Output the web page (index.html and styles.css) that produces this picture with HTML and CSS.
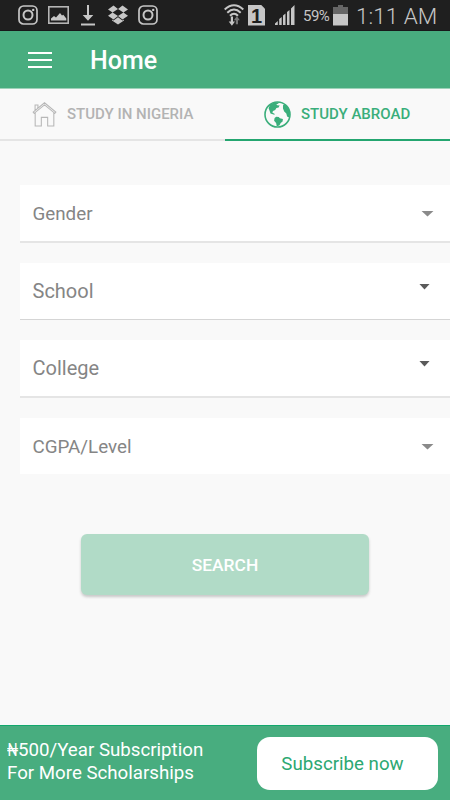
FILE: index.html
```html
<!DOCTYPE html>
<html lang="en">
<head>
  <meta charset="UTF-8" />
  <title>Home</title>
  <meta name="viewport" content="width=device-width, initial-scale=1.0" />
  <link rel="stylesheet" href="styles.css">
</head>
<body>
  <div class="status-bar">
    <div class="notifications">
      <svg width="20" height="20" viewBox="0 0 20 20" fill="none" stroke="#c6c6c6">
        <rect x="1" y="1" width="18" height="18" rx="4.5" stroke-width="1.7"/>
        <circle cx="10" cy="10" r="4.5" stroke-width="2"/>
        <circle cx="15.2" cy="4.9" r="1.2" fill="#c6c6c6" stroke="none"/>
      </svg>
      <svg width="21" height="18" viewBox="0 0 21 18">
        <rect x=".8" y=".8" width="19.4" height="16.4" fill="none" stroke="#b5b5b5" stroke-width="1.6"/>
        <path d="M3 14.5v-2l3-2.5 2 1.5 4-4.5 2 2.5 1.3-.8 3 3.8v2z" fill="#c6c6c6"/>
      </svg>
      <svg width="14" height="21" viewBox="0 0 14 21" fill="#c6c6c6">
        <path d="M6 0h2v10h4.3L7 15.7 1.7 10H6zM0 18.5h14v2H0z"/>
      </svg>
      <svg width="20" height="20" viewBox="0 0 20 20" fill="#c6c6c6">
        <path d="M5.5.6 10 4 4.6 7.5 0 4.4zM14.5.6 20 4.4l-4.6 3.1L10 4zM4.6 7.5 10 11l-4.5 3.6L0 10.7zM15.4 7.5l4.6 3.2-5.5 3.9L10 11zM10 12.2l4.5 3.3 1.5-.9v1L10 19.6l-6-4v-1l1.5.9z"/>
      </svg>
      <svg width="20" height="20" viewBox="0 0 20 20" fill="none" stroke="#c6c6c6">
        <rect x="1" y="1" width="18" height="18" rx="4.5" stroke-width="1.7"/>
        <circle cx="10" cy="10" r="4.5" stroke-width="2"/>
        <circle cx="15.2" cy="4.9" r="1.2" fill="#c6c6c6" stroke="none"/>
      </svg>
    </div>
    <div class="system">
      <svg class="wifi" width="20" height="22" viewBox="0 0 20 22" fill="none">
        <path d="M.7 5.4Q10-2.8 19.3 5.4M3.3 8.7Q10 2.4 16.7 8.7M6 11.7Q10 7.6 14 11.7" stroke="#c6c6c6" stroke-width="2"/>
        <path d="M6.8 12.5h2.2v5h2L7.9 21.7l-3.2-4.2h2.1z" fill="#c6c6c6"/>
        <path d="M11.8 20.3h2.2v-4h1.8L12.9 12l-3 4.3h1.9z" fill="#777"/>
      </svg>
      <span class="sim">1</span>
      <svg class="signal" width="20" height="20" viewBox="0 0 20 20" fill="#c6c6c6">
        <path d="M0 20v-1.5L2.8 16v4zM4.2 20v-6l2.5-2v8zM8 20v-9.5l2.5-2V20zM12 20V7l2.5-2v15zM16 20V3.5L19.5 0v20z"/>
      </svg>
      <span class="percent">59%</span>
      <svg class="battery" width="15" height="21" viewBox="0 0 15 21">
        <path d="M0 2h5V0h5v2h5v8H0z" fill="#666"/>
        <path d="M0 9h15v11.5H0z" fill="#c6c6c6"/>
      </svg>
      <span class="clock">1:11 AM</span>
    </div>
  </div>

  <header class="app-bar">
    <button class="menu" aria-label="Menu"><span></span><span></span><span></span></button>
    <h1>Home</h1>
  </header>

  <nav class="tabs">
    <a class="tab">
      <svg width="25" height="25" viewBox="0 0 26 26" fill="none" stroke="#b7b7b7" stroke-width="1.1">
        <path d="M1.2 10.6 13 .8l11.8 9.8-1 1.2L13 3 2.2 11.8zM3.2 8.8V3.2h3v3.1M3.3 11v14h6.4v-9h6.6v9h6.4V11"/>
      </svg>
      <span>STUDY IN NIGERIA</span>
    </a>
    <a class="tab active">
      <svg width="27" height="27" viewBox="0 0 27 27">
        <circle cx="13.5" cy="13.5" r="12.5" fill="none" stroke="#3aae7b" stroke-width="1.6"/>
        <path d="M6 3.8 9.5 1.7 15 1.3l-.8 1.5-2 .4 1.6 1.2 1.8-.2-1 2.4-2.2.5-1.2 2-2.2 1-.7 1.5 2.5 1.3-.5.8-3.8-1.2L5.4 9.2l-.8-2zM10.6 17l1.6-1.3 2.5.3 1.2 1.2 3 .8-.3 2.4-1.9 1.6-1.3 2.4-2.6.9-.7-3.4-2-2.2zM19 4.2l2.4-.9 3.3 4.3 1.3 5.5-.9 3.5-2-1.2-.8-3-2.1-1.9-1.2-3.1z" fill="#3aae7b"/>
      </svg>
      <span>STUDY ABROAD</span>
    </a>
  </nav>

  <main>
    <div class="field">Gender<i class="arrow"></i></div>
    <div class="field large thin">School<i class="arrow dark"></i></div>
    <div class="field large">College<i class="arrow dark"></i></div>
    <div class="field last">CGPA/Level<i class="arrow"></i></div>
    <button class="search">SEARCH</button>
  </main>

  <footer class="subscribe">
    <p><span class="naira">₦</span>500/Year Subscription<br>For More Scholarships</p>
    <button>Subscribe now</button>
  </footer>
</body>
</html>
```
FILE: styles.css
```css
* {
  box-sizing: border-box;
}
body {
  margin: 0;
  height: 800px;
  display: flex;
  flex-direction: column;
  font-family: Roboto, sans-serif;
  background: #f9f9f9;
  overflow: hidden;
}
button {
  border: none;
  padding: 0;
  font-family: inherit;
}
svg {
  display: block;
  flex: none;
}

/* status bar */
.status-bar {
  height: 31px;
  flex: none;
  display: flex;
  justify-content: space-between;
  padding: 0 12px 0 18px;
  background: #1f1f1f;
  border-bottom: 1px solid #17191a;
  color: #c6c6c6;
}
.notifications,
.system {
  display: flex;
  align-items: center;
}
.notifications {
  gap: 10px;
}
.notifications svg:nth-child(3) {
  margin: 0 3px 0 2px;
}
.sim {
  width: 17px;
  height: 21px;
  margin-left: 4px;
  background: #c6c6c6;
  clip-path: polygon(0 0, 75% 0, 100% 20%, 100% 100%, 0 100%);
  color: #1f1f1f;
  font-family: "Liberation Sans", sans-serif;
  font-size: 20px;
  font-weight: 700;
  line-height: 22px;
  text-align: center;
}
.signal {
  margin-left: 10px;
}
.percent {
  width: 27px;
  margin: 2px 0 0 8px;
  font-size: 15px;
  letter-spacing: -0.5px;
}
.battery {
  margin-left: 3px;
}
.clock {
  width: 82px;
  margin: 1px 0 0 8px;
  font-size: 22.5px;
  font-weight: 300;
  white-space: nowrap;
}

/* app bar */
.app-bar {
  height: 58px;
  flex: none;
  display: flex;
  align-items: center;
  padding-left: 28px;
  background: #48ad7f;
  border-bottom: 1px solid #9dd2b9;
}
.menu {
  width: 24px;
  margin-top: 1px;
  display: flex;
  flex-direction: column;
  gap: 5px;
  background: none;
}
.menu span {
  height: 2px;
  background: #fff;
}
h1 {
  margin: 2px 0 0 38px;
  font-size: 25px;
  font-weight: 500;
  color: #fff;
}

/* tabs */
.tabs {
  height: 52px;
  flex: none;
  display: grid;
  grid-template-columns: 225px 225px;
}
.tab {
  display: flex;
  align-items: center;
  gap: 10px;
  padding-left: 32px;
  border-bottom: 2px solid #e5e5e5;
  font-size: 15px;
  font-weight: 500;
  color: #b3b3b3;
}
.tab.active {
  padding-left: 39px;
  border-color: #24a670;
  color: #3aae7b;
}

/* search form */
main {
  flex: 1;
  display: flex;
  flex-direction: column;
  padding: 44px 0 0 20px;
}
.field {
  height: 58px;
  margin-bottom: 20px;
  display: flex;
  align-items: center;
  justify-content: space-between;
  padding: 1px 16px 0 12.5px;
  background: #fff;
  border-bottom: 2px solid #e5e5e5;
  font-size: 18.8px;
  line-height: 24px;
  color: #858585;
}
.field.large {
  padding-top: 0;
  font-size: 20px;
}
.field.thin {
  height: 57px;
  border-bottom: 1px solid #d5d5d5;
}
.field.last {
  height: 56px;
  border: none;
}
.arrow {
  width: 13px;
  height: 6px;
  background: #8a8a8a;
  clip-path: polygon(0 0, 100% 0, 50% 100%);
}
.arrow.dark {
  width: 11px;
  margin: 0 4px 9px 0;
  background: #5a5a5a;
}
.search {
  width: 288px;
  height: 61px;
  margin: 40px 0 0 61px;
  border-radius: 6px;
  background: #b1dbc7;
  box-shadow: 0 2px 3px rgba(0, 0, 0, 0.2);
  font-size: 17.4px;
  font-weight: 500;
  color: #fff;
}

/* subscription banner */
.subscribe {
  height: 75px;
  flex: none;
  display: flex;
  align-items: center;
  justify-content: space-between;
  padding: 0 12px 0 7px;
  background: #48ad7f;
  border-top: 1px solid #12a86d;
}
.subscribe p {
  margin: 0 0 2px;
  font-size: 18.7px;
  line-height: 23px;
  color: #fff;
}
.naira {
  display: inline-block;
  width: 11px;
  line-height: 1;
  transform: scaleX(0.75);
  transform-origin: left;
}
.subscribe button {
  width: 181px;
  height: 53px;
  margin-top: 1px;
  padding: 1px 10px 0 0;
  border-radius: 13px;
  background: #fff;
  font-size: 18.7px;
  color: #2ca872;
}
```
